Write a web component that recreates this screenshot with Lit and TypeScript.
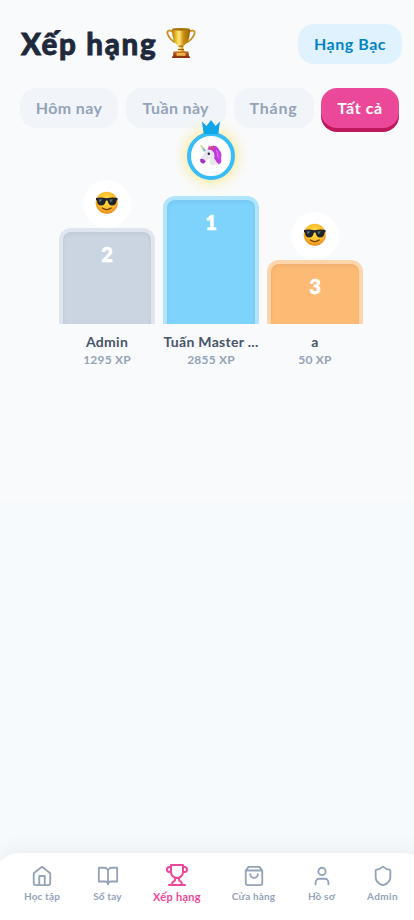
import { LitElement, html, css, svg } from "lit";
import { customElement } from "lit/decorators.js";
import { classMap } from "lit/directives/class-map.js";

const trophyEmoji = html`<svg class="cup" viewBox="0 0 30 32">
  <defs>
    <linearGradient id="gold"><stop offset="0" stop-color="#b8780c"/><stop offset=".28" stop-color="#f5cf3c"/><stop offset=".4" stop-color="#ffe98a"/><stop offset=".62" stop-color="#d0930e"/><stop offset="1" stop-color="#94600a"/></linearGradient>
    <linearGradient id="base" x2="0" y2="1"><stop offset="0" stop-color="#c66b21"/><stop offset="1" stop-color="#83300d"/></linearGradient>
  </defs>
  <path d="M7 5C3 2 0.5 4 1.8 7.5S5 13 9 15.5M23 5c4-3 6.500-1 5.200 2.500S25 13 21 15.500" fill="none" stroke="#c98f18" stroke-width="1.800"/>
  <path d="M6 2c0 9 2 14.500 7 17l-.6 4.500L10 25h10l-2.400-1.500L17 19c5-2.500 7-8 7-17z" fill="url(#gold)"/>
  <ellipse cx="15" cy="2.300" rx="9" ry="1.400" fill="#a8740c"/>
  <path d="M12.500 19.200h5M12 22.500h6" stroke="#9b5b08" stroke-width="1"/>
  <path d="M7.500 24.500h15l.7 6H6.800z" fill="url(#base)"/>
  <path d="M10.500 25.800h9v3h-9z" fill="#f2b34b"/>
  <path d="M6 29.500h18v1.500H6z" fill="#8a3410"/>
</svg>`;

const coolEmoji = html`<svg class="face" viewBox="0 0 24 24">
  <defs><radialGradient id="skin" cx=".5" cy=".4" r=".6"><stop offset="0" stop-color="#ffe24a"/><stop offset=".65" stop-color="#fdbd2c"/><stop offset="1" stop-color="#e9851a"/></radialGradient></defs>
  <circle cx="12" cy="12" r="11.300" fill="url(#skin)"/>
  <path d="M1 7.200q5-1.200 11 .3 6-1.500 11-.3v2l-1 .6c-.3 3.700-1.800 5-4.300 5-2.800 0-4.300-1.600-4.800-4.800q-.9-.6-1.800 0c-.5 3.200-2 4.800-4.800 4.800-2.500 0-4-1.300-4.300-5l-1-.6z" fill="#20242a"/>
  <path d="M4 8.800l3.500-.3-2.800 3.400zM15 8.800l3.500-.3-2.800 3.400z" fill="#65707a"/>
  <path d="M7.500 17.300q4.500 3.300 9 0" fill="none" stroke="#703f0c" stroke-width="1.300" stroke-linecap="round"/>
</svg>`;

const unicornEmoji = html`<svg class="face" viewBox="0 0 24 24">
  <path d="M12 3.500c4-2 7.500 0 8.500 3.500 2.500 2.500 3 6 2 8.500 1 3 0 5.500-2.500 6.500l-5-9z" fill="#c63ce0"/>
  <path d="M7.500 7.500C10 4.500 14 4.500 16 8c1.500 4 .5 8.500 3.500 13-3 2.200-6.500 2-9 .5.800-2 1-3.500.3-5-2 .2-3 1-4.300 3-1.500 2-4.500 1.500-5.200-.8C1.500 14.500 5 12 7.500 7.500z" fill="#e9e7ee"/>
  <path d="M1.300 16.300q3-1 5.600 2.300C5.500 22 1.800 21.500 1.200 18.500z" fill="#a334c4"/>
  <path d="M8.500 6.500c1.500-3 5-4 7-2.500 3.500 1.500 3.500 5 2.500 7.500 2 3 2.500 6.500 1 9.500l-3.500-5.500c1-4-.5-7.500-4-8.500z" fill="#bb38d6"/>
  <path d="M17.500 7c2 3.500.8 5.500 2.500 8.500" fill="none" stroke="#e77df0" stroke-width="1"/>
  <path d="M9.500 6.500l.5-4.500 2.500 3.500 2.200-3.500.6 5z" fill="#d84a86"/>
  <path d="M7.300 8L.8 1.500l4 7.700z" fill="#8fd6c0"/>
  <path d="M2 3.300l1.600-.2M3.200 5.600l2.300-.7" stroke="#e7c24e" stroke-width="1.100"/>
  <path d="M6.500 8.200L5 5.700" stroke="#a88fe0" stroke-width="1.200"/>
  <circle cx="10" cy="11" r="1.200" fill="#292432"/>
</svg>`;

const crown = html`<svg class="crown" viewBox="0 0 20 14">
  <path d="M1 1.500l4.500 4.500L10 0l4.500 6L19 1.500 17.300 14H2.700z" fill="#0ea5e9"/>
</svg>`;

const navItems = [
  { key: "home", label: "Học tập", icon: svg`<path d="M3 9l9-7 9 7v11a2 2 0 0 1-2 2H5a2 2 0 0 1-2-2zM9 22V12h6v10"/>` },
  { key: "book", label: "Sổ tay", icon: svg`<path d="M2 3h6a4 4 0 0 1 4 4v14a3 3 0 0 0-3-3H2zM22 3h-6a4 4 0 0 0-4 4v14a3 3 0 0 1 3-3h7z"/>` },
  { key: "rank", label: "Xếp hạng", active: true, icon: svg`<path d="M6 9H4.500a2.500 2.500 0 0 1 0-5H6M18 9h1.500a2.500 2.500 0 0 0 0-5H18M4 22h16M10 14.660V17c0 .55-.47.980-.970 1.210C7.850 18.750 7 20.240 7 22M14 14.660V17c0 .55.47.980.970 1.210C16.150 18.750 17 20.240 17 22M18 2H6v7a6 6 0 0 0 12 0z"/>` },
  { key: "shop", label: "Cửa hàng", icon: svg`<path d="M6 2L3 6v14a2 2 0 0 0 2 2h14a2 2 0 0 0 2-2V6l-3-4zM3 6h18M16 10a4 4 0 0 1-8 0"/>` },
  { key: "me", label: "Hồ sơ", icon: svg`<path d="M19 21v-2a4 4 0 0 0-4-4H9a4 4 0 0 0-4 4v2"/><circle cx="12" cy="7" r="4"/>` },
  { key: "admin", label: "Admin", icon: svg`<path d="M20 13c0 5-3.500 7.500-7.660 8.950a1 1 0 0 1-.670-.010C7.500 20.500 4 18 4 13V6a1 1 0 0 1 1-1c2 0 4.500-1.200 6.240-2.720a1.170 1.170 0 0 1 1.520 0C14.510 3.810 17 5 19 5a1 1 0 0 1 1 1z"/>` },
];

const filters = [
  { key: "day", label: "Hôm nay" },
  { key: "week", label: "Tuần này" },
  { key: "month", label: "Tháng" },
  { key: "all", label: "Tất cả" },
];

const podium = [
  { rank: 2, name: "Admin", xp: "1295 XP", avatar: coolEmoji },
  { rank: 1, name: "Tuấn Master ...", xp: "2855 XP", avatar: unicornEmoji },
  { rank: 3, name: "a", xp: "50 XP", avatar: coolEmoji },
];

@customElement("app-root")
export class AppRoot extends LitElement {
  static styles = css`
    :host { display: flex; flex-direction: column; height: 920px; overflow: hidden; background: #f6fafd; font-family: Lato, "Noto Sans", sans-serif; font-weight: 700; }
    * { box-sizing: border-box; }
    svg { display: block; }
    main { height: 501px; flex: none; background: #f9fafc; }
    header { display: flex; justify-content: space-between; padding: 24px 12px 0 21px; height: 64px; }
    h1 { display: flex; margin: 0; font-size: 29.500px; line-height: 40px; font-weight: 900; color: #1e293b; white-space: nowrap; }
    .title { width: 145px; letter-spacing: 1.700px; -webkit-text-stroke: .8px #1e293b; stroke-linejoin: round; }
    .cup { width: 30px; height: 32px; margin-top: 3px; }
    .league { width: 104px; height: 40px; border-radius: 16px; background: #e0f2fe; color: #0284c7; font-size: 16px; line-height: 39px; letter-spacing: .55px; text-align: center; }
    .filters { display: flex; gap: 8px; padding: 24px 0 0 20px; height: 68px; }
    .chip { flex: none; height: 40px; border-radius: 16px; background: #f1f5f9; color: #94a3b8; font-size: 16px; line-height: 39px; letter-spacing: .35px; text-align: center; white-space: nowrap; }
    .day { width: 98px; }
    .week { width: 99.500px; }
    .month { width: 80px; letter-spacing: .8px; }
    .all { width: 78px; margin-left: -.5px; letter-spacing: .6px; }
    .on { background: #ec4899; color: #fff; box-shadow: 0 4px 0 #be185d; }
    .podium { display: flex; justify-content: center; align-items: flex-end; gap: 8px; width: 304px; height: 236px; margin-left: 59px; }
    .place { width: 96px; display: flex; flex-direction: column; align-items: center; }
    .avatar { position: relative; width: 48px; height: 48px; border-radius: 50%; background: #fff; display: grid; place-items: center; }
    .face { width: 23.500px; height: 23.500px; margin-bottom: 2px; }
    .p1 .avatar { border: 4px solid #38bdf8; margin-bottom: 16px; box-shadow: 0 0 15px rgba(253, 224, 71, .8); }
    .crown { position: absolute; width: 20px; height: 14px; left: 10px; top: -16px; }
    .bar { width: 96px; border: 4px solid rgba(255, 255, 255, .4); border-bottom: 0; border-radius: 12px 12px 0 0; color: #fff; font-size: 20px; line-height: 28px; font-weight: 900; -webkit-text-stroke: .6px #fff; text-align: center; padding-top: 8px; box-shadow: inset 0 2px 4px rgba(0, 0, 0, .06); }
    .p1 .bar { height: 128px; background: #7dd3fc; }
    .p2 .bar { height: 96px; background: #cbd5e1; }
    .p3 .bar { height: 64px; background: #fdba74; }
    .name { margin-top: 8px; font-size: 14px; line-height: 20px; letter-spacing: .3px; color: #475569; white-space: nowrap; }
    .xp { font-size: 12px; line-height: 16px; letter-spacing: .2px; color: #94a3b8; white-space: nowrap; }
    nav { margin: auto -14px 0 -5px; display: flex; align-items: flex-start; height: 67px; padding: 10px 0 0 16px; border-radius: 24px 24px 0 0; background: #fff; box-shadow: 0 -4px 20px rgba(0, 0, 0, .05); color: #94a3b8; }
    .tab { flex: none; display: flex; flex-direction: column; align-items: center; font-size: 10px; line-height: 13px; letter-spacing: .15px; white-space: nowrap; }
    .tab svg { width: 22px; height: 22px; margin: 2px 0 3px; fill: none; stroke: currentColor; stroke-width: 2; stroke-linecap: round; stroke-linejoin: round; }
    .home { width: 62px; }
    .book { width: 69px; }
    .rank { width: 70px; }
    .shop { width: 83px; }
    .me { width: 53px; }
    .admin { width: 69px; letter-spacing: .4px; }
    .current { color: #ec4899; font-size: 11px; letter-spacing: .3px; }
    .current svg { width: 24px; height: 24px; margin: 0 0 3px; }
  `;

  render() {
    return html`
      <main>
        <header>
          <h1><span class="title">Xếp hạng</span>${trophyEmoji}</h1>
          <div class="league">Hạng Bạc</div>
        </header>
        <div class="filters">
          ${filters.map((f) => html`<div class=${classMap({ chip: true, [f.key]: true, on: f.key === "all" })}><span>${f.label}</span></div>`)}
        </div>
        <section class="podium">
          ${podium.map((p) => html`
            <div class="place p${p.rank}">
              <div class="avatar">${p.avatar}${p.rank === 1 ? crown : null}</div>
              <div class="bar">${p.rank}</div>
              <div class="name">${p.name}</div>
              <div class="xp">${p.xp}</div>
            </div>`)}
        </section>
      </main>
      <nav>
        ${navItems.map((n) => html`
          <div class=${classMap({ tab: true, [n.key]: true, current: !!n.active })}>
            <svg viewBox="0 0 24 24">${n.icon}</svg><span>${n.label}</span>
          </div>`)}
      </nav>
    `;
  }
}
